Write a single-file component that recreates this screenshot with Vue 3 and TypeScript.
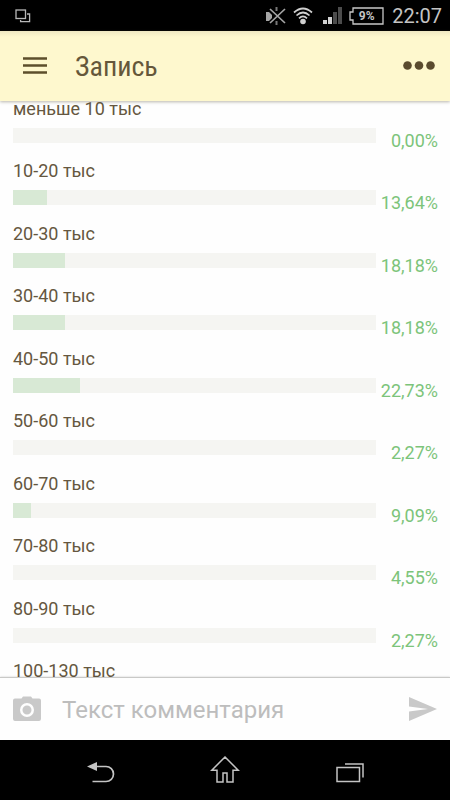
<script setup lang="ts">
import { ref } from 'vue'

interface PollOption {
  label: string
  percent: string
  fill: number
}

const options: PollOption[] = [
  { label: 'меньше 10 тыс', percent: '0,00%', fill: 0 },
  { label: '10-20 тыс', percent: '13,64%', fill: 9.3 },
  { label: '20-30 тыс', percent: '18,18%', fill: 14.4 },
  { label: '30-40 тыс', percent: '18,18%', fill: 14.4 },
  { label: '40-50 тыс', percent: '22,73%', fill: 18.5 },
  { label: '50-60 тыс', percent: '2,27%', fill: 0 },
  { label: '60-70 тыс', percent: '9,09%', fill: 5 },
  { label: '70-80 тыс', percent: '4,55%', fill: 0 },
  { label: '80-90 тыс', percent: '2,27%', fill: 0 },
]

const lastLabel = '100-130 тыс'
const comment = ref('')
</script>

<template>
  <div class="screen">
    <div class="status">
      <svg class="status-left" width="16" height="14" viewBox="0 0 16 14" fill="none" stroke="#b8b8b8" stroke-width="1.3">
        <rect x="1" y="1" width="9.5" height="8.5" />
        <path d="M12 5h2.6v7.6H5.6V11" />
      </svg>
      <svg width="21" height="20" viewBox="0 0 21 20">
        <path d="M1 6h3l3 3v3l-3 3H1z" fill="#a5a5a5" />
        <path d="M5 3l15 14M20 3L5 17" stroke="#a5a5a5" stroke-width="1.7" fill="none" />
        <path d="M11.5 1v4M11.5 15v4" stroke="#777" stroke-width="2" />
      </svg>
      <svg class="wifi" width="20" height="20" viewBox="0 0 20 20" fill="none" stroke="#d0d0d0" stroke-width="1.7">
        <path d="M1 6.5Q10-1.5 19 6.5M3.5 9.5Q10 3.5 16.5 9.5M6 12.3Q10 8.500 14 12.3" />
        <circle cx="10" cy="15.5" r="2.8" fill="#d0d0d0" stroke="none" />
      </svg>
      <svg class="signal" width="20" height="18" viewBox="0 0 20 18">
        <path d="M1 13h4v4H1zM6 10h4v7H6z" fill="#d2d2d2" />
        <path d="M11 5h4v12h-4zM16 0h4v17h-4z" fill="#4c4c4c" />
      </svg>
      <span class="battery">
        <svg width="35" height="18" viewBox="0 0 35 18" fill="none" stroke="#c8c8c8" stroke-width="1.3">
          <path d="M4 1h30v16H4v-4H1V5h3z" />
        </svg>
        <span class="battery-text">9%</span>
      </span>
      <time class="clock">22:07</time>
    </div>

    <header class="header">
      <button class="icon-button" type="button" aria-label="Меню">
        <svg width="24" height="18" viewBox="0 0 24 18" stroke="#5d4f2c" stroke-width="2.3">
          <path d="M0 1.500h24M0 8.500h24M0 15.500h24" />
        </svg>
      </button>
      <h1 class="title">Запись</h1>
      <button class="icon-button" type="button" aria-label="Ещё">
        <svg width="32" height="10" viewBox="0 0 32 10" fill="#5a4b2e">
          <circle cx="4.5" cy="4.5" r="4.3" />
          <circle cx="16" cy="4.5" r="4.3" />
          <circle cx="27.5" cy="4.5" r="4.3" />
        </svg>
      </button>
    </header>

    <main class="content">
      <ul class="poll">
        <li v-for="option in options" :key="option.label" class="option">
          <div class="label">{{ option.label }}</div>
          <div class="result">
            <div class="track">
              <div class="fill" :style="{ width: option.fill + '%' }"></div>
            </div>
            <span class="percent">{{ option.percent }}</span>
          </div>
        </li>
        <li class="option">
          <div class="label">{{ lastLabel }}</div>
        </li>
      </ul>
    </main>

    <form class="composer" @submit.prevent>
      <button class="icon-button" type="button" aria-label="Добавить фото">
        <svg width="28" height="26" viewBox="0 0 28 26">
          <path fill="#c9c9c9" fill-rule="evenodd" d="M8.5 2.5L10 .5h8l1.500 2H26a2 2 0 0 1 2 2V23a2.2 2.2 0 0 1-2 2H2a2.2 2.2 0 0 1-2-2V4.5a2 2 0 0 1 2-2zM14 7a7 7 0 1 0 0 14a7 7 0 0 0 0-14zM14 9.500a4.500 4.500 0 1 1 0 9a4.500 4.500 0 0 1 0-9z" />
        </svg>
      </button>
      <input v-model="comment" class="field" type="text" placeholder="Текст комментария" aria-label="Текст комментария" />
      <button class="icon-button" type="submit" aria-label="Отправить">
        <svg width="28" height="24" viewBox="0 0 28 24" fill="#c9c9c9">
          <path d="M0 0L28 12L0 24V14.500L19 12L0 9.500z" />
        </svg>
      </button>
    </form>

    <nav class="system-nav">
      <button class="icon-button" type="button" aria-label="Назад">
        <svg width="30" height="30" viewBox="0 0 30 30" fill="none" stroke="#c4c4c4" stroke-width="1.7">
          <path d="M10 10.500h11a7.500 7.500 0 0 1 0 15H7.500" />
          <path d="M2 10.500l10-4.500v9z" fill="#c4c4c4" stroke="none" />
        </svg>
      </button>
      <button class="icon-button" type="button" aria-label="Домой">
        <svg width="30" height="30" viewBox="0 0 30 30" fill="none" stroke="#c4c4c4" stroke-width="1.5">
          <path d="M15 1L1.800 14.200H7V26h6v-9h4v9h6V14.200h5.200z" />
        </svg>
      </button>
      <button class="icon-button" type="button" aria-label="Недавние приложения">
        <svg width="30" height="30" viewBox="0 0 30 30" fill="none" stroke="#c4c4c4" stroke-width="1.5">
          <rect x="2" y="11.5" width="22.5" height="14" />
          <path d="M10 8h18v13.5" />
        </svg>
      </button>
    </nav>
  </div>
</template>

<style>
body {
  margin: 0;
}
</style>

<style scoped>
.screen {
  display: flex;
  flex-direction: column;
  height: 100vh;
  overflow: hidden;
  background: #fefefe;
  font-family: Roboto, "Noto Sans", sans-serif;
}

.icon-button {
  display: flex;
  padding: 0;
  border: 0;
  background: none;
  cursor: pointer;
}

.status {
  display: flex;
  align-items: center;
  flex: none;
  height: 31px;
  padding: 0 8px 0 15px;
  background: #000;
  color: #c4c4c4;
}

.status-left {
  margin-right: auto;
}

.wifi {
  margin-left: 7px;
}

.signal {
  margin-left: 9px;
}

.battery {
  display: grid;
  place-items: center;
  margin: 0 8px 0 7px;
}

.battery > * {
  grid-area: 1 / 1;
}

.battery-text {
  font-size: 12px;
  line-height: 16px;
  font-weight: 700;
}

.clock {
  font-size: 20px;
  line-height: 24px;
}

.header {
  display: flex;
  align-items: center;
  flex: none;
  height: 70px;
  box-sizing: border-box;
  padding: 0 15px 0 23px;
  position: relative;
  background: linear-gradient(#efe8c2, #fef8ce 6px, #fef8ce);
  box-shadow: 0 1px 3px rgba(80, 75, 50, 0.4);
}

.title {
  flex: 1;
  margin: 0 0 0 28px;
  padding-top: 2px;
  color: #65573a;
  font-family: "Roboto Condensed", Roboto, sans-serif;
  font-size: 28px;
  line-height: 36px;
  font-weight: 400;
}

.content {
  flex: 1;
  min-height: 0;
  overflow: hidden;
}

.poll {
  margin: -5px 0 0;
  padding: 0 12px 0 13px;
  list-style: none;
}

.option {
  height: 62px;
}

.option:nth-child(even) {
  height: 63px;
}

.label {
  color: #655740;
  font-size: 18px;
  line-height: 26px;
}

.result {
  display: flex;
  align-items: flex-start;
  padding-top: 6px;
}

.track {
  flex: 1;
  height: 15px;
  background: #f5f5f2;
}

.fill {
  height: 100%;
  background: #d8e9d5;
}

.percent {
  width: 62px;
  color: #7cc47a;
  font-size: 18px;
  line-height: 26px;
  text-align: right;
}

.composer {
  display: flex;
  align-items: center;
  flex: none;
  height: 63px;
  box-sizing: border-box;
  padding: 0 13px;
  position: relative;
  border-top: 1px solid #c9c9c7;
  background: #fefefe;
  box-shadow: 0 0 2px rgba(0, 0, 0, 0.2);
}

.field {
  flex: 1;
  min-width: 0;
  height: 40px;
  margin: 0 20px 0 21px;
  padding: 2px 0 0;
  box-sizing: border-box;
  border: 0;
  outline: 0;
  background: none;
  color: #655740;
  font-family: inherit;
  font-size: 24px;
}

.field::placeholder {
  color: #bdbdbd;
  opacity: 1;
}

.system-nav {
  display: flex;
  align-items: center;
  justify-content: center;
  gap: 95px;
  flex: none;
  height: 60px;
  box-sizing: border-box;
  padding-top: 2px;
  background: #000;
}
</style>
